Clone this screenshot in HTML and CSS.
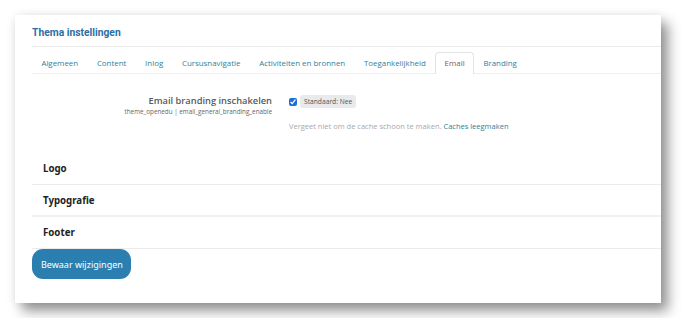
FILE: index.html
```html
<!DOCTYPE html>
<html lang="nl">
	<head>
		<meta charset="UTF-8">
		<title>Thema instellingen</title>
		<link rel="stylesheet" href="styles.css">
	</head>
	<body>
		<div class="panel">
			<h2 class="title">Thema instellingen</h2>
			<!--tabbladen-->
			<ul class="tabs">
				<li><a href="#">Algemeen</a></li>
				<li><a href="#">Content</a></li>
				<li><a href="#">Inlog</a></li>
				<li><a href="#">Cursusnavigatie</a></li>
				<li><a href="#">Activiteiten en bronnen</a></li>
				<li><a href="#">Toegankelijkheid</a></li>
				<li class="active"><a href="#">Email</a></li>
				<li><a href="#">Branding</a></li>
			</ul>
			<!--instelling-->
			<div class="setting">
				<div class="label">
					<div class="name">Email branding inschakelen</div>
					<div class="key">theme_openedu | email_general_branding_enable</div>
				</div>
				<div class="control">
					<div class="check">
						<input type="checkbox" checked>
						<span class="badge">Standaard: Nee</span>
					</div>
					<div class="note">Vergeet niet om de cache schoon te maken. <a href="#">Caches leegmaken</a></div>
				</div>
			</div>
			<div class="section">Logo</div>
			<div class="section thick">Typografie</div>
			<div class="section">Footer</div>
			<button class="save">Bewaar wijzigingen</button>
		</div>
	</body>
</html>
```

FILE: styles.css
```css
* {
	margin: 0;
	padding: 0;
	box-sizing: border-box;
}

body {
	background-color: #fff;
	font-family: "Open Sans", "Noto Sans", sans-serif;
}

ul {
	list-style: none
}

a {
	text-decoration: none;
	color: #2e7f9e;
}

.panel {
	width: 646px;
	height: 288px;
	margin: 15px;
	padding-left: 17px;
	background-color: #fff;
	box-shadow: 7px 8px 12px rgba(0, 0, 0, 0.42), 0 0 10px rgba(0, 0, 0, 0.07);
}

.title {
	height: 32px;
	padding-top: 11px;
	font-family: Roboto, sans-serif;
	font-size: 10.3px;
	font-weight: bold;
	line-height: 14px;
	color: #2c6fa5;
	border-bottom: 1px solid #ececec;
}

.tabs {
	display: flex;
	height: 27px;
	padding-top: 5px;
	border-bottom: 1px solid #efefef;
}

.tabs li {
	height: 22px;
	padding: 0 8.4px;
	border: 1px solid transparent;
	border-bottom: none;
	border-radius: 4px 4px 0 0;
	font-size: 7.9px;
	line-height: 21px;
}

.tabs li.active {
	border-color: #e3e3e3;
	background-color: #fff;
	margin-bottom: -1px;
}

.tabs li.active a {
	color: #7a5a5a;
}

.setting {
	display: flex;
	padding-top: 20px;
	height: 79px;
}

.label {
	width: 240px;
	text-align: right;
}

.name {
	font-family: "Open Sans", sans-serif;
	font-size: 9.3px;
	font-weight: 600;
	color: #555b60;
	line-height: 14px;
}

.key {
	font-size: 6.3px;
	color: #666;
	line-height: 8px;
}

.control {
	margin-left: 17px;
}

.check {
	display: flex;
	align-items: center;
	height: 15px;
}

.check input {
	width: 8px;
	height: 8px;
	margin: 0 3px 0 0;
	accent-color: #1a6fd8;
}

.badge {
	background-color: #e8eaec;
	border-radius: 3px;
	padding: 0 4px;
	font-size: 6.7px;
	line-height: 13px;
	color: #555;
}

.note {
	margin-top: 12px;
	font-size: 7.5px;
	color: #a8a8a8;
}

.section {
	height: 32px;
	padding-left: 11px;
	border-bottom: 1px solid #ebebeb;
	font-family: "Noto Sans", sans-serif;
	font-size: 9.7px;
	font-weight: bold;
	line-height: 31px;
	color: #222;
}

.section.thick {
	border-bottom: 2px solid #f2f2f2;
}

.save {
	display: block;
	width: 99px;
	height: 30px;
	border: none;
	border-radius: 11px;
	background-color: #2a7fb0;
	color: #fff;
	font-family: "Noto Sans", sans-serif;
	font-size: 9px;
	text-align: left;
	padding-left: 9px;
}
```
